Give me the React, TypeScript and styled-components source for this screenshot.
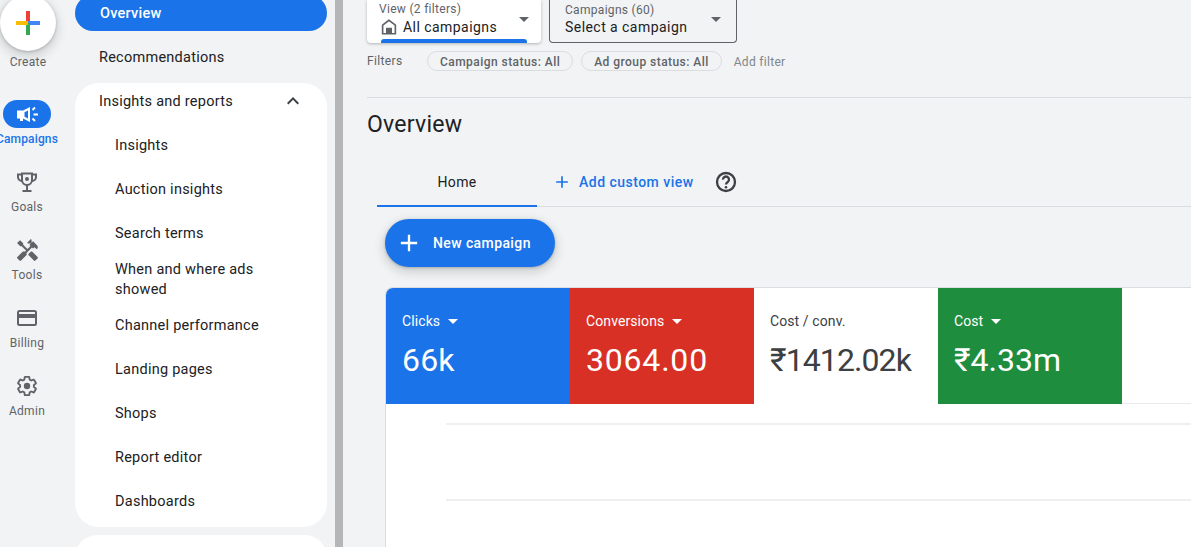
import React from "react";
import styled, { createGlobalStyle } from "styled-components";
import { MdAdd, MdExpandLess, MdHandyman } from "react-icons/md";

const Global = createGlobalStyle`
  html, body {
    margin: 0;
    height: 100%;
    overflow: hidden;
    background: #f1f3f4;
    font-family: Roboto, "Liberation Sans", sans-serif;
  }
`;

const Page = styled.div`
  display: flex;
  width: 1191px;
  height: 547px;
  overflow: hidden;
`;

const Rail = styled.aside`
  flex: 0 0 75px;
  width: 75px;
  margin-top: -5px;
  display: flex;
  flex-direction: column;
  padding-right: 21px;
  box-sizing: border-box;
`;

const CreateCircle = styled.div`
  width: 56px;
  height: 56px;
  flex: none;
  border-radius: 50%;
  background: #fff;
  box-shadow: 0 1px 3px rgba(60, 64, 67, 0.3), 0 4px 8px 3px rgba(60, 64, 67, 0.15);
  display: flex;
  align-items: center;
  justify-content: center;
`;

const CreateLabel = styled.div`
  margin: 3px 0 30px;
  text-align: center;
  font-size: 12px;
  line-height: 16px;
  letter-spacing: 0.3px;
  color: #5f6368;
  width: 56px;
`;

const RailItem = styled.div`
  height: 68px;
  display: flex;
  flex-direction: column;
  align-items: center;
  color: #5f6368;
`;

const RailIcon = styled.div<{ $active?: boolean }>`
  width: 48px;
  height: 28px;
  border-radius: 14px;
  display: flex;
  align-items: center;
  justify-content: center;
  background: ${(p) => (p.$active ? "#1a73e8" : "transparent")};
  color: ${(p) => (p.$active ? "#fff" : "#5f6368")};
`;

const RailLabel = styled.div<{ $active?: boolean }>`
  margin-top: 3px;
  font-size: 12px;
  line-height: 16px;
  white-space: nowrap;
  letter-spacing: ${(p) => (p.$active ? "0.15px" : "0.3px")};
  font-weight: ${(p) => (p.$active ? 500 : 400)};
  color: ${(p) => (p.$active ? "#1a73e8" : "#5f6368")};
`;

const Nav = styled.nav`
  flex: 0 0 252px;
  margin-top: -5px;
  display: flex;
  flex-direction: column;
`;

const NavRow = styled.div<{ $active?: boolean }>`
  height: ${(p) => (p.$active ? "36px" : "44px")};
  flex: none;
  margin-bottom: 4px;
  padding: ${(p) => (p.$active ? "0 0 0 25px" : "0 0 0 24px")};
  display: flex;
  align-items: center;
  font-size: 14.5px;
  letter-spacing: 0.25px;
  border-radius: ${(p) => (p.$active ? "18px" : "0")};
  font-weight: ${(p) => (p.$active ? 500 : 400)};
  background: ${(p) => (p.$active ? "#1a73e8" : "transparent")};
  color: ${(p) => (p.$active ? "#fff" : "#202124")};
`;

const NavCard = styled.div`
  background: #fff;
  border-radius: 24px;
  flex: none;
  margin-bottom: 8px;
  padding-bottom: 4px;
`;

const NavCardNext = styled(NavCard)`
  height: 40px;
`;

const NavHead = styled.div`
  height: 36px;
  margin-bottom: 4px;
  padding: 0 24px;
  display: flex;
  align-items: center;
  justify-content: space-between;
  font-size: 14.5px;
  letter-spacing: 0.25px;
  color: #202124;
  svg {
    font-size: 24px;
    color: #3c4043;
    margin-right: -2px;
  }
`;

const SubItem = styled.div<{ $tall?: boolean }>`
  height: ${(p) => (p.$tall ? "48px" : "44px")};
  box-sizing: border-box;
  padding: 2px 24px 0 40px;
  display: flex;
  align-items: center;
  font-size: 14.5px;
  line-height: 20px;
  letter-spacing: 0.25px;
  color: #202124;
`;

const Splitter = styled.div`
  flex: 0 0 8px;
  margin-left: 8px;
  background: #b5b6b8;
  width: 8px;
`;

const Main = styled.main`
  flex: 1;
  min-width: 0;
  padding-left: 24px;
  display: flex;
  flex-direction: column;
`;

const Pickers = styled.div`
  display: flex;
  gap: 8px;
  height: 43px;
  flex: none;
`;

const PickerLabel = styled.div`
  font-size: 12px;
  line-height: 14px;
  letter-spacing: 0.3px;
  color: #5f6368;
`;

const PickerValue = styled.div`
  display: flex;
  align-items: center;
  gap: 5px;
  margin-top: 1px;
  font-size: 14px;
  line-height: 20px;
  letter-spacing: 0.45px;
  color: #202124;
  svg {
    margin-left: 1px;
    flex: none;
  }
`;

const ViewPicker = styled.div`
  position: relative;
  width: 174px;
  box-sizing: border-box;
  background: #fff;
  border-radius: 0 0 4px 4px;
  box-shadow: 0 1px 3px rgba(60, 64, 67, 0.35);
  padding: 2px 0 0 12px;
`;

const CampaignPicker = styled.div`
  position: relative;
  width: 188px;
  box-sizing: border-box;
  border: 1px solid #5f6368;
  border-top: 0;
  border-radius: 0 0 4px 4px;
  padding: 3px 0 0 15px;
  ${PickerValue} {
    margin-top: 0;
  }
`;

const Caret = styled.span<{ $color?: string }>`
  display: inline-block;
  width: 0;
  height: 0;
  border-left: 5px solid transparent;
  border-right: 5px solid transparent;
  border-top: 5px solid ${(p) => p.$color || "#5f6368"};
`;

const PickerCaret = styled(Caret)<{ $right: number }>`
  position: absolute;
  right: ${(p) => p.$right}px;
  top: 17px;
`;

const ViewBar = styled.div`
  position: absolute;
  left: 14px;
  right: 14px;
  bottom: 0;
  height: 4px;
  border-radius: 3px 3px 0 0;
  background: #1a73e8;
`;

const FilterRow = styled.div`
  height: 20px;
  margin-top: 8px;
  flex: none;
  display: flex;
  align-items: center;
  font-size: 12px;
  color: #5f6368;
`;

const FilterTitle = styled.div`
  width: 60px;
  letter-spacing: 0.35px;
`;

const Chip = styled.div`
  height: 20px;
  box-sizing: border-box;
  border: 1px solid #dadce0;
  border-radius: 10px;
  padding: 1px 12px 0;
  margin-right: 8px;
  display: flex;
  align-items: center;
  font-weight: 500;
  letter-spacing: 0.45px;
  color: #5f6368;
`;

const AddFilter = styled.div`
  margin-left: 4px;
  padding-top: 1px;
  letter-spacing: 0.3px;
  color: #80868b;
`;

const Rule = styled.hr`
  border: 0;
  height: 1px;
  flex: none;
  background: #dadce0;
  margin: 26px 0 0;
`;

const Title = styled.h1`
  margin: 14px 0 0;
  height: 26px;
  font-size: 23px;
  line-height: 26px;
  font-weight: 400;
  letter-spacing: 0.25px;
  color: #202124;
  flex: none;
`;

const Tabs = styled.div`
  margin: 18px 0 0 10px;
  height: 50px;
  flex: none;
  display: flex;
  align-items: stretch;
  border-bottom: 1px solid #dadce0;
`;

const HomeTab = styled.div`
  width: 160px;
  box-sizing: border-box;
  margin-bottom: -1px;
  border-bottom: 2px solid #1a73e8;
  display: flex;
  align-items: center;
  justify-content: center;
  padding-top: 2px;
  font-size: 14px;
  letter-spacing: 0.3px;
  color: #202124;
`;

const AddView = styled.div`
  display: flex;
  align-items: center;
  padding: 2px 0 0 15px;
  font-size: 14px;
  font-weight: 500;
  letter-spacing: 0.48px;
  color: #1a73e8;
  svg {
    font-size: 20px;
    margin-right: 7px;
  }
`;

const HelpSlot = styled.div`
  display: flex;
  align-items: center;
  padding: 2px 0 0 20px;
  color: #3c4043;
`;

const NewButton = styled.div`
  margin: 12px 0 0 18px;
  width: 170px;
  height: 48px;
  flex: none;
  border-radius: 24px;
  box-sizing: border-box;
  padding-left: 10px;
  background: #1a73e8;
  box-shadow: 0 1px 3px rgba(60, 64, 67, 0.3), 0 4px 8px 3px rgba(60, 64, 67, 0.15);
  display: flex;
  align-items: center;
  font-size: 14px;
  font-weight: 500;
  letter-spacing: 0.4px;
  color: #fff;
  svg {
    font-size: 28px;
    margin-right: 10px;
  }
`;

const Panel = styled.section`
  margin: 20px 0 0 18px;
  flex: 1;
  background: #fff;
  border: 1px solid #dadce0;
  border-right: 0;
  border-bottom: 0;
  border-radius: 8px 0 0 0;
  overflow: hidden;
`;

const Tiles = styled.div`
  display: flex;
  height: 116px;
  border-bottom: 1px solid #e8eaed;
  box-sizing: border-box;
`;

const Tile = styled.div<{ $bg?: string }>`
  width: 184px;
  height: 116px;
  flex: none;
  box-sizing: border-box;
  padding: 24px 16px 0;
  background: ${(p) => p.$bg || "#fff"};
  color: ${(p) => (p.$bg ? "#fff" : "#3c4043")};
`;

const TileLabel = styled.div`
  height: 18px;
  display: flex;
  align-items: center;
  gap: 8px;
  font-size: 14px;
  letter-spacing: 0.1px;
`;

const TileValue = styled.div<{ $tracking: number }>`
  margin-top: 11px;
  font-size: 32px;
  line-height: 38px;
  letter-spacing: ${(p) => p.$tracking}px;
`;

const Chart = styled.div`
  padding: 19px 0 0 60px;
`;

const GridLine = styled.div`
  height: 2px;
  background: #eeeff0;
  margin-bottom: 74px;
`;

const GooglePlus = () => (
  <svg width="24" height="24" viewBox="0 0 24 24">
    <rect x="10" y="0" width="4" height="12" fill="#ea4335" />
    <rect x="12" y="10" width="12" height="4" fill="#4285f4" />
    <rect x="10" y="12" width="4" height="12" fill="#34a853" />
    <rect x="0" y="10" width="12" height="4" fill="#fbbc04" />
  </svg>
);

const MegaphoneIcon = () => (
  <svg width="24" height="24" viewBox="0 0 24 24">
    <path
      fillRule="evenodd"
      fill="currentColor"
      d="M2 8.5h6L15 5v15l-7-3.5v2.5H5v-2.5H2zM9.5 10.3 13 8.5v8l-3.5-1.8z"
    />
    <path
      d="M17.5 8 20 5.5M18.5 12.5H23M17.5 16.5 20 19"
      fill="none"
      stroke="currentColor"
      strokeWidth="2"
    />
  </svg>
);

const TrophyIcon = () => (
  <svg width="24" height="24" viewBox="0 0 24 24" fill="none" stroke="currentColor" strokeWidth="2">
    <path d="M7 3.5h10V10a5 5 0 0 1-10 0z" />
    <path d="M7 4.5H3V7a4 4 0 0 0 4 4M17 4.5h4V7a4 4 0 0 1-4 4" />
    <path d="M12 15v5M7.5 21h9" />
    <circle cx="12" cy="9" r="2" fill="currentColor" stroke="none" />
  </svg>
);

const CardIcon = () => (
  <svg width="24" height="24" viewBox="0 0 24 24" fill="none" stroke="currentColor" strokeWidth="2">
    <rect x="3" y="5" width="18" height="14" rx="1.5" />
    <rect x="3" y="8" width="18" height="4" fill="currentColor" stroke="none" />
  </svg>
);

const GearIcon = () => (
  <svg width="24" height="24" viewBox="0 0 24 24" fill="none" stroke="currentColor" strokeWidth="2">
    <path
      d="M19.43 12.98c.04-.32.07-.64.07-.98s-.03-.66-.07-.98l2.11-1.65c.19-.15.24-.42.12-.64l-2-3.46c-.12-.22-.39-.3-.61-.22l-2.49 1c-.52-.4-1.08-.73-1.69-.98l-.38-2.65A.49.49 0 0 0 14 2h-4c-.25 0-.46.18-.49.42l-.38 2.65c-.61.25-1.17.59-1.69.98l-2.49-1c-.23-.09-.49 0-.61.22l-2 3.46c-.13.22-.07.49.12.64l2.11 1.65c-.04.32-.07.65-.07.98s.03.66.07.98l-2.11 1.65c-.19.15-.24.42-.12.64l2 3.46c.12.22.39.3.61.22l2.49-1c.52.4 1.08.73 1.69.98l.38 2.65c.03.24.24.42.49.42h4c.25 0 .46-.18.49-.42l.38-2.65c.61-.25 1.17-.59 1.69-.98l2.49 1c.23.09.49 0 .61-.22l2-3.46c.12-.22.07-.49-.12-.64z"
      transform="translate(.96 .96) scale(.92)"
    />
    <circle cx="12" cy="12" r="3.2" fill="currentColor" stroke="none" />
  </svg>
);

const HomeIcon = () => (
  <svg width="18" height="18" viewBox="0 0 24 24" fill="none" stroke="#5f6368" strokeWidth="2.2">
    <path d="M12 3 3.5 9.5V21h17V9.5z" />
    <rect x="8" y="13" width="8" height="8" fill="#5f6368" stroke="none" />
  </svg>
);

const HelpIcon = () => (
  <svg width="24" height="24" viewBox="0 0 24 24" fill="none" stroke="currentColor" strokeWidth="2.3">
    <circle cx="12" cy="12" r="9" />
    <path d="M9 9.6a3 3 0 1 1 4.7 2.4c-1.1.8-1.7 1.3-1.7 2.6" />
    <circle cx="12" cy="17.2" r="1.3" fill="currentColor" stroke="none" />
  </svg>
);

const tiles = [
  { label: "Clicks", value: "66k", bg: "#1a73e8", menu: true, tracking: 0.2 },
  { label: "Conversions", value: "3064.00", bg: "#d93025", menu: true, tracking: 0.8 },
  { label: "Cost / conv.", value: "₹1412.02k", tracking: -0.9 },
  { label: "Cost", value: "₹4.33m", bg: "#1e8e3e", menu: true, tracking: 0 },
];

const subItems = [
  "Insights",
  "Auction insights",
  "Search terms",
  "When and where ads showed",
  "Channel performance",
  "Landing pages",
  "Shops",
  "Report editor",
  "Dashboards",
];

const railItems = [
  { label: "Campaigns", icon: <MegaphoneIcon />, active: true },
  { label: "Goals", icon: <TrophyIcon /> },
  { label: "Tools", icon: <MdHandyman size={25} /> },
  { label: "Billing", icon: <CardIcon /> },
  { label: "Admin", icon: <GearIcon /> },
];

export default function App() {
  return (
    <Page>
      <Global />
      <Rail>
        <CreateCircle>
          <GooglePlus />
        </CreateCircle>
        <CreateLabel>Create</CreateLabel>
        {railItems.map((item) => (
          <RailItem key={item.label}>
            <RailIcon $active={item.active}>{item.icon}</RailIcon>
            <RailLabel $active={item.active}>{item.label}</RailLabel>
          </RailItem>
        ))}
      </Rail>
      <Nav>
        <NavRow $active>Overview</NavRow>
        <NavRow>Recommendations</NavRow>
        <NavCard>
          <NavHead>
            Insights and reports
            <MdExpandLess />
          </NavHead>
          {subItems.map((s) => (
            <SubItem key={s} $tall={s.startsWith("When")}>
              {s}
            </SubItem>
          ))}
        </NavCard>
        <NavCardNext />
      </Nav>
      <Splitter />
      <Main>
        <Pickers>
          <ViewPicker>
            <PickerLabel>View (2 filters)</PickerLabel>
            <PickerValue>
              <HomeIcon />
              All campaigns
            </PickerValue>
            <PickerCaret $right={12} />
            <ViewBar />
          </ViewPicker>
          <CampaignPicker>
            <PickerLabel>Campaigns (60)</PickerLabel>
            <PickerValue>Select a campaign</PickerValue>
            <PickerCaret $right={15} />
          </CampaignPicker>
        </Pickers>
        <FilterRow>
          <FilterTitle>Filters</FilterTitle>
          <Chip>Campaign status: All</Chip>
          <Chip>Ad group status: All</Chip>
          <AddFilter>Add filter</AddFilter>
        </FilterRow>
        <Rule />
        <Title>Overview</Title>
        <Tabs>
          <HomeTab>Home</HomeTab>
          <AddView>
            <MdAdd />
            Add custom view
          </AddView>
          <HelpSlot>
            <HelpIcon />
          </HelpSlot>
        </Tabs>
        <NewButton>
          <MdAdd />
          New campaign
        </NewButton>
        <Panel>
          <Tiles>
            {tiles.map((t) => (
              <Tile key={t.label} $bg={t.bg}>
                <TileLabel>
                  {t.label}
                  {t.menu && <Caret $color="#fff" />}
                </TileLabel>
                <TileValue $tracking={t.tracking}>{t.value}</TileValue>
              </Tile>
            ))}
          </Tiles>
          <Chart>
            <GridLine />
            <GridLine />
          </Chart>
        </Panel>
      </Main>
    </Page>
  );
}
